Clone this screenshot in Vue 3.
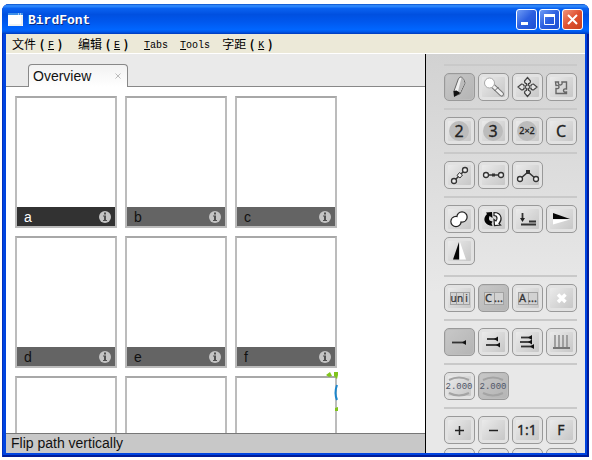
<template>
    <div class="desktop">
        <div class="window">
            <header class="title-bar">
                <svg class="app-icon" viewBox="0 0 15 13" aria-hidden="true">
                    <rect width="15" height="13" fill="#fff"/>
                    <rect width="15" height="2" fill="#3d8fe8"/>
                    <path d="M10 1h1M12 1h1" stroke="#fff"/>
                    <path d="M1 12h13V3" stroke="#dfe6e2" fill="none"/>
                </svg>
                <h1 class="title">BirdFont</h1>
                <button class="win-btn" aria-label="Minimize">
                    <svg viewBox="0 0 19 19"><path d="M4 13.500h7" stroke="#fff" stroke-width="3"/></svg>
                </button>
                <button class="win-btn" aria-label="Maximize">
                    <svg viewBox="0 0 19 19"><path d="M4 5.500h11" stroke="#fff" stroke-width="3"/><path d="M4.500 5v9.500h10V5" stroke="#fff" fill="none"/></svg>
                </button>
                <button class="win-btn close" aria-label="Close">
                    <svg viewBox="0 0 19 19"><path d="M5 5l9 9M14 5l-9 9" stroke="#fff" stroke-width="2"/></svg>
                </button>
            </header>

            <nav class="menu-bar">
                <button v-for="item in menus" :key="item.key + item.text" class="menu-item">
                    <template v-if="item.cjk">{{ item.text }}<span class="paren">(</span><span class="latin"><u>{{ item.key }}</u></span><span class="paren">)</span></template>
                    <span v-else class="latin"><u>{{ item.key }}</u>{{ item.text }}</span>
                </button>
            </nav>

            <div class="body">
                <main class="main">
                    <div class="tabs">
                        <div class="tab">
                            <button class="tab-name">Overview</button>
                            <button class="tab-close" aria-label="Close tab">
                                <svg viewBox="0 0 6 6"><path d="M.5.5l5 5M5.500.5l-5 5" stroke="#bbb"/></svg>
                            </button>
                        </div>
                    </div>

                    <div class="overview">
                        <div
                            v-for="(glyph, i) in glyphs"
                            :key="i"
                            class="glyph"
                            :class="{ selected: glyph && glyph === selected }"
                            @click="selected = glyph"
                        >
                            <div v-if="glyph" class="glyph-bar">
                                <span>{{ glyph }}</span>
                                <button class="info" :aria-label="'Info ' + glyph">
                                    <svg viewBox="0 0 12 12">
                                        <circle cx="6" cy="6" r="6" fill="#c4c4c4"/>
                                        <path d="M5 1.500h2v2H5zM4 4.500h3v4.500h1v1H4V9h1V5.500H4z" fill="#505050"/>
                                    </svg>
                                </button>
                            </div>
                        </div>
                        <svg class="mark" viewBox="0 0 14 42" aria-hidden="true">
                            <path d="M0 4l4-3 2 4-3 1zM8 1h4v3l-1 4-3-3z" fill="#80c41c"/>
                            <path d="M11 14q-3 8 0 15" stroke="#1c86cc" stroke-width="2" fill="none"/>
                            <path d="M9 37l3-1v4H9z" fill="#80c41c"/>
                        </svg>
                    </div>

                    <footer class="status">Flip path vertically</footer>
                </main>

                <aside class="toolbox">
                    <div v-for="(group, i) in groups" :key="i" class="group">
                        <button
                            v-for="tool in group"
                            :key="tool.name"
                            class="tool"
                            :class="{ active: tool.active }"
                            :aria-label="tool.name"
                        >
                            <svg class="tool-icon" viewBox="0 0 31 28" v-html="tool.icon"></svg>
                        </button>
                    </div>
                </aside>
            </div>
        </div>
    </div>
</template>

<script setup>
    import { ref } from 'vue';

    const menus = [
        { text: '文件', key: 'F', cjk: true },
        { text: '编辑', key: 'E', cjk: true },
        { text: 'abs', key: 'T' },
        { text: 'ools', key: 'T' },
        { text: '字距', key: 'K', cjk: true },
    ];

    // empty slots have no caption
    const glyphs = ['a', 'b', 'c', 'd', 'e', 'f', '', '', ''];
    const selected = ref('a');

    const label = (text, size = 16, y = 20) =>
        `<text x="15" y="${y}" font-size="${size}" text-anchor="middle" fill="#222" stroke="#222" stroke-width=".3">${text}</text>`;
    const disc = '<circle cx="15" cy="14" r="10" fill="#bcbcbc"/>';
    const node = (x, y) => `<circle cx="${x}" cy="${y}" r="2.500" fill="#eee" stroke="#333" stroke-width="1.300"/>`;
    const arrow = (x1, x2, y) => `<path d="M${x1} ${y}H${x2}" stroke="#333" stroke-width="1.800"/><path d="M${x2 - 4} ${y}l4-2.500v5z" fill="#111"/>`;
    const frames = (splits) =>
        `<rect x="6.500" y="8.500" width="19" height="12" fill="#d2d2d2" stroke="#a2a2a2"/>` +
        splits.map((x) => `<path d="M${x} 8v13" stroke="#a2a2a2"/>`).join('');
    const spacing =
        '<path d="M5 8q10-5 20 0M5 21q10 5 20 0" fill="none" stroke="#a4a4a4" stroke-width="2"/>' +
        '<text class="mono" x="15" y="17" font-size="9" text-anchor="middle" fill="#4f5668">2.000</text>';
    const lobe = (angle) =>
        `<path transform="rotate(${angle} 15.500 14)" d="M15.500 4.500l3 3.500q0 2.500-2 2.500v2h-2v-2q-2 0-2-2.500z" fill="#e4e4e4" stroke="#444" stroke-width="1.200"/>`;

    const groups = [
        [
            {
                name: 'Pen',
                active: true,
                icon: '<path d="M10 18l4.500-12.500q2-2 3-1.500 3 2.500 3.500 6l-5 11-5.500 2z" fill="#f0f0f0" stroke="#666"/><path d="M17.500 4.500q3 2.500 3 6l-4.500 9-2-1z" fill="#bbb"/><path d="M9.500 18l3-.5 4 2.500-6.500 4z" fill="#111"/>',
            },
            {
                name: 'Zoom',
                icon: '<path d="M15 13l8.500 8" stroke="#777" stroke-width="5" stroke-linecap="round"/><path d="M15 13l8.500 8" stroke="#f1f1f1" stroke-width="3" stroke-linecap="round"/><path d="M16.500 18l4-4" stroke="#666"/><circle cx="11.500" cy="10" r="5" fill="#fff" stroke="#aaa"/>',
            },
            {
                name: 'Move',
                icon: [0, 90, 180, 270].map(lobe).join('') + '<circle cx="15.500" cy="14" r="2" fill="#ddd" stroke="#444"/>',
            },
            {
                name: 'Move canvas',
                icon: '<path d="M9.500 9h3q-.5 3 1.800 3t1.700-3h4.500v7q-3-.5-3 1.500t3 1.500v1.500h-10.500v-5q3 .5 3-1.500t-3-1.500z" fill="none" stroke="#666" stroke-width="1.400"/>',
            },
        ],
        [
            { name: 'Quadratic points', icon: disc + label('2') },
            { name: 'Cubic points', icon: disc + label('3') },
            { name: 'Double points', icon: disc + label('2×2', 9, 17) },
            { name: 'Convert points', icon: label('C') },
        ],
        [
            {
                name: 'Symmetric handles',
                icon: '<path d="M10 20L21 9" stroke="#333" stroke-width="1.500"/>' + node(10, 20) + node(21, 9) + '<path d="M13 14.500l2.500-3 3 2.500-2.500 3z" fill="#eee" stroke="#333"/>',
            },
            {
                name: 'Straight handles',
                icon: '<path d="M8 14h15" stroke="#333" stroke-width="1.500"/>' + node(8, 14) + node(23, 14) + '<rect x="14" y="12.500" width="3" height="3" fill="#333"/>',
            },
            {
                name: 'Corner handles',
                icon: '<path d="M8 18l8-7 8 7" fill="none" stroke="#333" stroke-width="1.500"/>' + node(8, 18) + node(24, 18) + '<rect x="14" y="9" width="4" height="4" fill="#333"/>',
            },
        ],
        [
            {
                name: 'Merge paths',
                icon: '<g stroke="#222" stroke-width="2.500"><circle cx="12" cy="16.500" r="4.500"/><circle cx="18" cy="12" r="4.500"/></g><g fill="#fff"><circle cx="12" cy="16.500" r="4.500"/><circle cx="18" cy="12" r="4.500"/></g>',
            },
            {
                name: 'Change orientation',
                icon: '<path d="M14.500 21l-1-2.500 1-2q-4-.5-3.500-3.500l.5-2 3 2-.5-6-6 .5 1 1.500q-4 4-2 8 2 3.500 7.500 4z" fill="#050505"/><path d="M16 7.500q6 0 7 5 .5 3.500-2 6l1.500 1.500-6 .5-.5-6 2 1.500q2-3 0-5l-2-.5z" fill="#fff" stroke="#222" stroke-width="1.200"/>',
            },
            {
                name: 'Move to baseline',
                icon: '<path d="M10.500 8v7M17 16.500h7M9 19.500h15" stroke="#333" stroke-width="1.800"/><path d="M8 13h5l-2.500 4z" fill="#222"/>',
            },
            {
                name: 'Flip path vertically',
                icon: '<path d="M7 8v6h17z" fill="#050505"/><path d="M7 14.500v5l17-5z" fill="#fff"/>',
            },
            {
                name: 'Flip path horizontally',
                icon: '<path d="M9 22.500h6V5z" fill="#050505"/><path d="M16 5v17.500h6z" fill="#fff"/>',
            },
        ],
        [
            {
                name: 'Unicode',
                icon: frames([12.5, 19.5]) + '<g font-size="10" text-anchor="middle" fill="#333" stroke="#333" stroke-width=".2"><text x="9.500" y="18">u</text><text x="16" y="18">n</text><text x="22.500" y="18">i</text></g>',
            },
            {
                name: 'Characters',
                active: true,
                icon: frames([16.5]) + '<g font-size="11" fill="#333" stroke="#333" stroke-width=".3"><text x="7" y="18">C</text><text x="16" y="18">...</text></g>',
            },
            {
                name: 'All characters',
                icon: frames([16.5]) + '<g font-size="11" fill="#333" stroke="#333" stroke-width=".3"><text x="7" y="18">A</text><text x="16" y="18">...</text></g>',
            },
            {
                name: 'Delete',
                icon: '<path d="M12 10.500l7.500 7.500M19.500 10.500l-7.500 7.500" stroke="#fff" stroke-width="3.500"/>',
            },
        ],
        [
            { name: 'One guide', active: true, icon: arrow(8, 22, 14.5) },
            { name: 'Two guides', icon: arrow(9, 20, 11) + arrow(8, 22, 17) },
            { name: 'Three guides', icon: arrow(9, 20, 9.5) + arrow(8, 20, 14) + arrow(9, 22, 18.5) },
            {
                name: 'Grid',
                icon: '<path d="M9 7v13M13 7v13M17 7v13M21 7v13" stroke="#999" stroke-width="1.800"/><path d="M7 20h17" stroke="#777" stroke-width="2"/>',
            },
        ],
        [
            { name: 'Grid size 1', icon: spacing },
            { name: 'Grid size 2', active: true, icon: spacing },
        ],
        [
            { name: 'Zoom in', icon: '<path d="M11 14.500h9M15.500 10v9" stroke="#222" stroke-width="1.500"/>' },
            { name: 'Zoom out', icon: '<path d="M11 14.500h9" stroke="#222" stroke-width="1.500"/>' },
            { name: 'Full size', icon: label('1:1', 14, 19) },
            { name: 'Fit', icon: label('F', 14, 19) },
            { name: 'Background', icon: '' },
            { name: 'Boundaries', icon: '' },
            { name: 'Previous view', icon: '' },
            { name: 'Next view', icon: '' },
        ],
    ];
</script>

<style>
    body {
        background-color: #fff;
    }
</style>

<style scoped>
    .desktop {
        box-sizing: border-box;
        height: 100vh;
        padding: 4px 3px 3px 2px;
        font-family: "Liberation Sans", Arial, sans-serif;
        font-size: 14px;
        color: #111;
    }

    button {
        padding: 0;
        border: none;
        background: none;
        font: inherit;
        color: inherit;
    }

    svg {
        display: block;
    }

    .window {
        box-sizing: border-box;
        height: 100%;
        display: flex;
        flex-direction: column;
        overflow: hidden;
        padding: 0 4px 4px;
        border-radius: 7px 7px 0 0;
        background-color: #0044e0;
        box-shadow: inset 1px 0 #0030c0, inset -2px -2px #001c98;
    }

    .title-bar {
        height: 30px;
        flex: none;
        display: flex;
        align-items: center;
        gap: 2px;
        margin: 0 -4px;
        padding: 0 6px;
        background: linear-gradient(#0a50c8 0, #3590ff 6%, #0a62f0 15%, #0050e0 35%, #0058ee 60%, #0066ff 85%, #0058ea 93%, #0038b8 100%);
    }

    .app-icon {
        width: 15px;
        height: 13px;
    }

    .title {
        flex: 1;
        margin: 0;
        padding: 4px 0 0 3px;
        font-family: "Liberation Mono", monospace;
        font-size: 13px;
        line-height: 20px;
        color: #fff;
        text-shadow: 1px 1px #0a2a80;
    }

    .win-btn {
        box-sizing: border-box;
        width: 21px;
        height: 21px;
        border: 1px solid #fff;
        border-radius: 3px;
        background: linear-gradient(135deg, #6f9cf5, #2c5fe0 50%, #1d50d4);
    }

    .win-btn.close {
        background: linear-gradient(135deg, #f0947c, #e05030 50%, #c8401c);
    }

    .menu-bar {
        height: 19px;
        flex: none;
        display: flex;
        gap: 12px;
        padding-left: 6px;
        border-bottom: 1px solid #fff;
        background-color: #ece9d8;
    }

    .menu-item {
        font-family: "Noto Sans CJK SC", sans-serif;
        font-size: 12px;
        line-height: 19px;
        color: #000;
    }

    .paren {
        display: inline-block;
        width: 12px;
        text-align: center;
        font-weight: bold;
    }

    .latin {
        font-family: "Liberation Mono", monospace;
        font-size: 10px;
        vertical-align: 1px;
    }

    .body {
        flex: 1;
        min-height: 0;
        display: flex;
    }

    .main {
        flex: 1;
        min-width: 0;
        display: flex;
        flex-direction: column;
        border-right: 1px solid #000;
        background-color: #fff;
    }

    .tabs {
        height: 32px;
        flex: none;
        display: flex;
        align-items: flex-end;
        padding-left: 22px;
        border-bottom: 1px solid #888;
        background-color: #eaeaea;
    }

    .tab {
        height: 22px;
        display: flex;
        align-items: center;
        gap: 24px;
        margin-bottom: -1px;
        padding: 0 6px 0 4px;
        border: 1px solid #888;
        border-bottom: none;
        border-radius: 4px 4px 0 0;
        background: linear-gradient(#f2f2f2, #fff);
    }

    .tab-close {
        width: 6px;
        height: 6px;
    }

    .overview {
        flex: 1;
        min-height: 0;
        position: relative;
        overflow: hidden;
        display: grid;
        grid-template-columns: repeat(auto-fill, 102px);
        grid-auto-rows: 132px;
        gap: 8px;
        padding: 9px;
    }

    .glyph {
        display: flex;
        flex-direction: column;
        justify-content: flex-end;
        border: 2px solid #bcbcbc;
        border-top-color: #a8a8a8;
    }

    .glyph-bar {
        height: 19px;
        display: flex;
        align-items: center;
        justify-content: space-between;
        padding: 0 4px 0 7px;
        background-color: #646464;
    }

    .selected .glyph-bar {
        background-color: #323232;
        color: #fff;
    }

    .info {
        width: 12px;
        height: 12px;
    }

    .mark {
        position: absolute;
        left: 320px;
        top: 284px;
        width: 14px;
        height: 42px;
    }

    .status {
        height: 19px;
        flex: none;
        padding-left: 5px;
        border-top: 1px solid #777;
        background-color: #c8c8c8;
        line-height: 19px;
    }

    .toolbox {
        box-sizing: border-box;
        width: 159px;
        overflow: hidden;
        padding: 10px 8px 0 18px;
        background: linear-gradient(#d2d2d2, #e8e8e8 60%);
    }

    .group {
        display: flex;
        flex-wrap: wrap;
        gap: 4px 3px;
        padding: 7px 0;
        border-top: 2px solid #c9c9c9;
    }

    .group:nth-child(4) {
        padding-bottom: 10px;
    }

    .tool {
        box-sizing: border-box;
        width: 31px;
        height: 28px;
        border: 1px solid #999;
        border-radius: 5px;
        background: linear-gradient(135deg, #f0f0f0, #d8d8d8 50%, #c2c2c2);
        box-shadow: inset 0 0 0 3px #e2e2e2;
    }

    .tool.active {
        background: linear-gradient(135deg, #c8c8c8, #b4b4b4);
        box-shadow: inset 0 0 0 1px #bdbdbd;
    }

    .tool-icon {
        width: 31px;
        height: 28px;
        margin: -1px;
        font-family: "Noto Sans", sans-serif;
    }

    .tool-icon :deep(.mono) {
        font-family: "Liberation Mono", monospace;
    }
</style>
